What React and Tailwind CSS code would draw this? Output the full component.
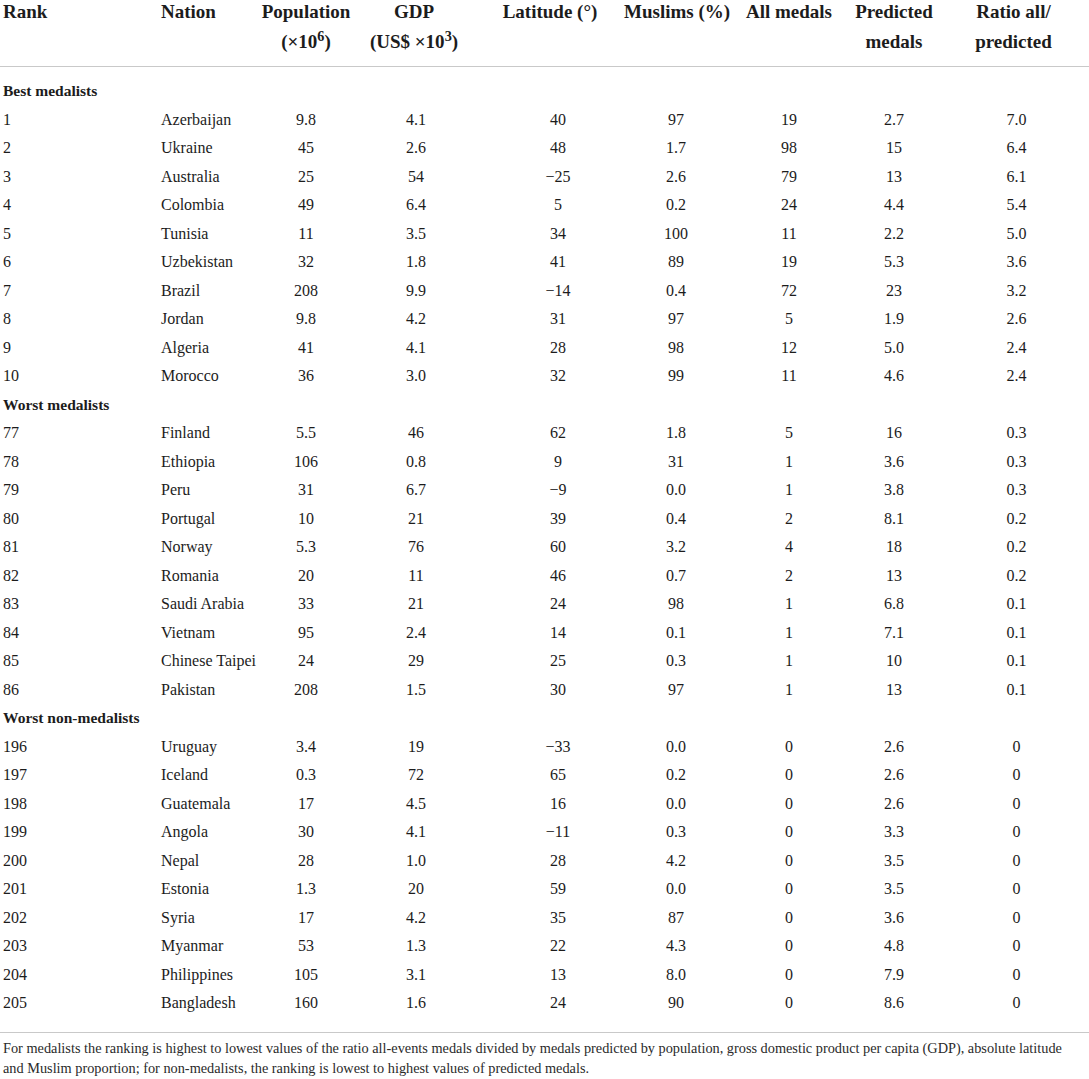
const sections = [
  {
    title: 'Best medalists',
    rows: [
      ['1', 'Azerbaijan', '9.8', '4.1', '40', '97', '19', '2.7', '7.0'],
      ['2', 'Ukraine', '45', '2.6', '48', '1.7', '98', '15', '6.4'],
      ['3', 'Australia', '25', '54', '−25', '2.6', '79', '13', '6.1'],
      ['4', 'Colombia', '49', '6.4', '5', '0.2', '24', '4.4', '5.4'],
      ['5', 'Tunisia', '11', '3.5', '34', '100', '11', '2.2', '5.0'],
      ['6', 'Uzbekistan', '32', '1.8', '41', '89', '19', '5.3', '3.6'],
      ['7', 'Brazil', '208', '9.9', '−14', '0.4', '72', '23', '3.2'],
      ['8', 'Jordan', '9.8', '4.2', '31', '97', '5', '1.9', '2.6'],
      ['9', 'Algeria', '41', '4.1', '28', '98', '12', '5.0', '2.4'],
      ['10', 'Morocco', '36', '3.0', '32', '99', '11', '4.6', '2.4'],
    ],
  },
  {
    title: 'Worst medalists',
    rows: [
      ['77', 'Finland', '5.5', '46', '62', '1.8', '5', '16', '0.3'],
      ['78', 'Ethiopia', '106', '0.8', '9', '31', '1', '3.6', '0.3'],
      ['79', 'Peru', '31', '6.7', '−9', '0.0', '1', '3.8', '0.3'],
      ['80', 'Portugal', '10', '21', '39', '0.4', '2', '8.1', '0.2'],
      ['81', 'Norway', '5.3', '76', '60', '3.2', '4', '18', '0.2'],
      ['82', 'Romania', '20', '11', '46', '0.7', '2', '13', '0.2'],
      ['83', 'Saudi Arabia', '33', '21', '24', '98', '1', '6.8', '0.1'],
      ['84', 'Vietnam', '95', '2.4', '14', '0.1', '1', '7.1', '0.1'],
      ['85', 'Chinese Taipei', '24', '29', '25', '0.3', '1', '10', '0.1'],
      ['86', 'Pakistan', '208', '1.5', '30', '97', '1', '13', '0.1'],
    ],
  },
  {
    title: 'Worst non-medalists',
    rows: [
      ['196', 'Uruguay', '3.4', '19', '−33', '0.0', '0', '2.6', '0'],
      ['197', 'Iceland', '0.3', '72', '65', '0.2', '0', '2.6', '0'],
      ['198', 'Guatemala', '17', '4.5', '16', '0.0', '0', '2.6', '0'],
      ['199', 'Angola', '30', '4.1', '−11', '0.3', '0', '3.3', '0'],
      ['200', 'Nepal', '28', '1.0', '28', '4.2', '0', '3.5', '0'],
      ['201', 'Estonia', '1.3', '20', '59', '0.0', '0', '3.5', '0'],
      ['202', 'Syria', '17', '4.2', '35', '87', '0', '3.6', '0'],
      ['203', 'Myanmar', '53', '1.3', '22', '4.3', '0', '4.8', '0'],
      ['204', 'Philippines', '105', '3.1', '13', '8.0', '0', '7.9', '0'],
      ['205', 'Bangladesh', '160', '1.6', '24', '90', '0', '8.6', '0'],
    ],
  },
];

// fixed column track so every row lines up with the header
const cols = 'grid grid-cols-[158px_102px_92px_124px_148px_104px_122px_88px_151px]';

const Row = ({ cells }) => (
  <div className={`${cols} h-[28.5px] leading-[28.5px] text-[16px] whitespace-nowrap`}>
    <div className="pl-[3px]">{cells[0]}</div>
    <div className="pl-[3px]">{cells[1]}</div>
    <div className="text-center">{cells[2]}</div>
    <div className="text-center pl-[4px]">{cells[3]}</div>
    <div className="text-center pl-[16px]">{cells[4]}</div>
    <div className="text-center">{cells[5]}</div>
    <div className="text-center">{cells[6]}</div>
    <div className="text-center">{cells[7]}</div>
    <div className="text-center pl-[6px]">{cells[8]}</div>
  </div>
);

const App = () => {
  return (
    <div className="w-[1089px] h-[1079px] overflow-hidden bg-white text-[#1c1c1c] font-['Liberation_Serif',serif]">

      {/* Header */}
      <div className={`${cols} -mt-[3px] h-[60px] text-[19px] font-bold leading-[30px] whitespace-nowrap`}>
        <div className="pl-[3px]">Rank</div>
        <div className="pl-[3px]">Nation</div>
        <div className="text-center">Population<br />(×10<sup>6</sup>)</div>
        <div className="text-center">GDP<br />(US$ ×10<sup>3</sup>)</div>
        <div className="text-center">Latitude (°)</div>
        <div className="text-center">Muslims (%)</div>
        <div className="text-center">All medals</div>
        <div className="text-center">Predicted<br />medals</div>
        <div className="text-center">Ratio all/<br />predicted</div>
      </div>

      <div className="mt-[9px] h-px bg-[#c9c9c9]" />

      <div className="mt-[10px]">
        {sections.map((s) => (
          <div key={s.title}>
            <div className="h-[28.5px] leading-[28.5px] pl-[3px] text-[15.5px] font-bold">{s.title}</div>
            {s.rows.map((r) => <Row key={r[0]} cells={r} />)}
          </div>
        ))}
      </div>

      <div className="mt-[14px] h-px bg-[#c9c9c9]" />

      {/* Footnote */}
      <p className="mt-[5px] pl-[3px] text-[14.3px] leading-[20px] text-[#2a2a2a] whitespace-nowrap">
        For medalists the ranking is highest to lowest values of the ratio all-events medals divided by medals predicted by population, gross domestic product per capita (GDP), absolute latitude
        <br />
        and Muslim proportion; for non-medalists, the ranking is lowest to highest values of predicted medals.
      </p>
    </div>
  );
};

export default App;
